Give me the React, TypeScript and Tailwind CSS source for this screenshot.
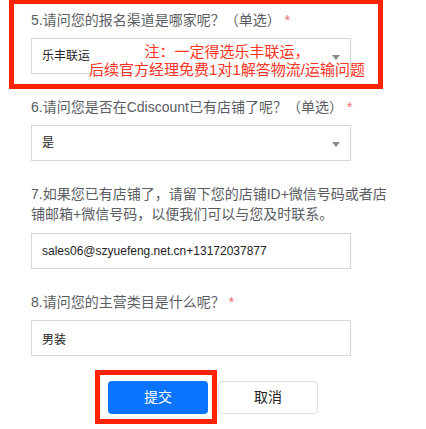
import { useState } from "react";

const font = {
  fontFamily: '"Liberation Sans", "Noto Sans CJK SC", sans-serif',
};

function Label({ children }: { children: React.ReactNode }) {
  return (
    <div className="text-[14px] leading-5 text-[#5a5d63] mb-2 whitespace-nowrap">
      {children}
    </div>
  );
}

function Star() {
  return <span className="text-[#f56c6c] ml-1">*</span>;
}

function Arrow() {
  return (
    <svg className="absolute right-[10px] top-[16px]" width="8" height="5" viewBox="0 0 8 5">
      <path d="M0 0 L8 0 L4 5 Z" fill="#8a8a8a" />
    </svg>
  );
}

export default function App() {
  const [email, setEmail] = useState("sales06@szyuefeng.net.cn+13172037877");
  const [category, setCategory] = useState("男装");

  return (
    <div className="relative w-[426px] h-[429px] bg-white overflow-hidden" style={font}>
      {/* annotation frame around question 5 */}
      <div className="absolute left-[9px] -top-[1px] w-[374px] h-[90px] border-[5px] border-[#ff2200] pointer-events-none" />

      <div className="pl-[31px] pt-[10px]">
        <div className="mb-[23px]">
          <Label>
            5.请问您的报名渠道是哪家呢？（单选）<Star />
          </Label>
          <div className="relative w-[320px] h-[36px] border border-[#d3d7de] flex items-center pl-[10px] text-[12px] text-[#222]">
            乐丰联运
            <Arrow />
            <div className="absolute left-[40px] top-[4px] w-[310px] text-center text-[15px] leading-[18px] text-[#ff3322] whitespace-nowrap">
              注：一定得选乐丰联运，
              <br />
              后续官方经理免费1对1解答物流/运输问题
            </div>
          </div>
        </div>

        <div className="mb-[23px]">
          <Label>
            6.请问您是否在Cdiscount已有店铺了呢？（单选）<Star />
          </Label>
          <div className="relative w-[320px] h-[36px] border border-[#d3d7de] flex items-center pl-[10px] text-[12px] text-[#222]">
            是
            <Arrow />
          </div>
        </div>

        <div className="mb-[23px]">
          <div className="text-[14px] leading-[20px] text-[#5a5d63] mb-[9px] whitespace-nowrap">
            7.如果您已有店铺了，请留下您的店铺ID+微信号码或者店
            <br />
            铺邮箱+微信号码，以便我们可以与您及时联系。
          </div>
          <input
            value={email}
            onChange={(e) => setEmail(e.target.value)}
            className="block w-[320px] h-[36px] border border-[#d3d7de] pl-[10px] text-[12px] text-[#222] outline-none"
          />
        </div>

        <div>
          <Label>
            8.请问您的主营类目是什么呢？<Star />
          </Label>
          <input
            value={category}
            onChange={(e) => setCategory(e.target.value)}
            className="block w-[320px] h-[36px] border border-[#d3d7de] pl-[10px] text-[12px] text-[#222] outline-none"
          />
        </div>

        <div className="flex gap-[10px] pl-[77px] mt-[25px]">
          <div className="relative">
            <button className="w-[100px] h-[33px] rounded-[4px] bg-[#0a74ff] text-white text-[14px]">
              提交
            </button>
            <div className="absolute -left-[13px] -top-[11px] w-[122px] h-[54px] border-[5px] border-[#ff2200] pointer-events-none" />
          </div>
          <button className="w-[100px] h-[33px] rounded-[4px] bg-white border border-[#dcdfe6] text-[#222] text-[14px]">
            取消
          </button>
        </div>
      </div>
    </div>
  );
}
